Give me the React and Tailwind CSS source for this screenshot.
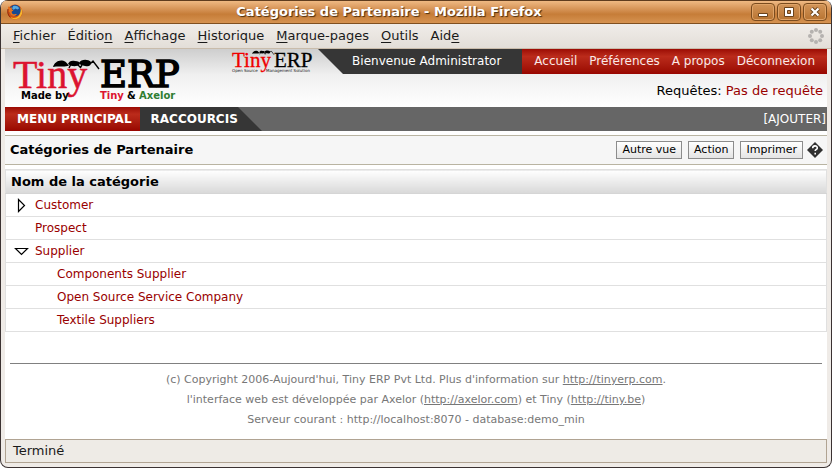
import React from "react";

const MENUS = [
  ["", "F", "ichier"],
  ["Éditio", "n", ""],
  ["", "A", "ffichage"],
  ["", "H", "istorique"],
  ["", "M", "arque-pages"],
  ["", "O", "utils"],
  ["Aid", "e", ""],
];

const ROWS = [
  { name: "Customer", state: "closed", level: 0 },
  { name: "Prospect", state: "leaf", level: 0 },
  { name: "Supplier", state: "open", level: 0 },
  { name: "Components Supplier", state: "leaf", level: 1 },
  { name: "Open Source Service Company", state: "leaf", level: 1 },
  { name: "Textile Suppliers", state: "leaf", level: 1 },
];

const RED_BAR = "bg-linear-to-b from-[#9c0a04] via-[#bb2b1b] via-30% to-[#980500]";

function FirefoxIcon() {
  return (
    <svg width="16" height="16" viewBox="0 0 16 16" aria-hidden="true">
      <circle cx="8" cy="8" r="7.5" fill="#d0500f" />
      <circle cx="8" cy="6.5" r="5.800" fill="#174a91" />
      <path d="M6 2.2c2-1 5-.2 6.300 2l-2 1.200-1.700-.9-2 1.300-1.500-1.300z" fill="#58a9df" />
      <path d="M1.200 2.200 3 4l2-.7-.2 2 1.700 1.100-1.700 1c-.5 2 1.300 3.400 3.400 2.700 1.300-.5 2 .2 1 1-2 1.700-5.200.8-6.200-1.800C1.500 7 .5 5 1.200 2.200z" fill="#e8701a" />
      <path d="M13.500 3.200c2.600 3.400 2.200 8-1 10.600-3 2.200-7.500 2-10-1 3 1.800 7 1.400 9-.8 2.200-2.300 2.600-5.500 2-8.800z" fill="#f7b52c" />
      <path d="M1 5c-.8 3.500.2 6.500 2.500 8.500" stroke="#8f2a10" fill="none" />
    </svg>
  );
}

function Ant() {
  return (
    <g>
      <path d="M0 8C1 4 5 1 9 1.500c4 .5 5 3 7 5C11 8.500 6 6.500 0 8z" />
      <path d="M15 5c1-3 4-4 7-3 3 0 5 1 5 3-3 3-8 3-12 0z" />
      <path d="M26 4c2-4 9-4 12-1 0 4-2 5-6 4-3-.5-5-1-6-3z" />
      <path d="M18 5l-2 4M24 5l4 4M29 6l-2 3M37 5l3-3 6 8" fill="none" stroke="#000" strokeWidth="1.400" />
    </g>
  );
}

function BigLogo() {
  return (
    <svg className="overflow-visible" width="176" height="46" viewBox="0 0 176 46" role="img" aria-label="Tiny ERP">
      <text x="2" y="31" fontFamily="Liberation Serif, serif" fontSize="40" fill="#dc1430" stroke="#dc1430" strokeWidth="0.500">Tiny</text>
      <text x="89" y="30" fontFamily="DejaVu Serif, serif" fontSize="37" fill="#000" stroke="#000" strokeWidth="1.600">ERP</text>
      <g transform="translate(42 2)"><Ant /></g>
      <g fontFamily="DejaVu Sans, sans-serif" fontWeight="700" fontSize="10">
        <text x="10" y="42">Made by</text>
        <text x="89" y="42" fill="#dc1430">Tiny</text>
        <text x="116" y="42">&amp;</text>
        <text x="128" y="42" fill="#2f7d32">Axelor</text>
      </g>
    </svg>
  );
}

function SmallLogo() {
  return (
    <svg className="overflow-visible" width="84" height="25" viewBox="0 0 84 25" role="img" aria-label="Tiny ERP, Open Source Management Solution">
      <text x="0" y="18" fontFamily="Liberation Serif, serif" fontSize="21" fill="#f00000" stroke="#f00000" strokeWidth="0.300">Tiny</text>
      <text x="42" y="18" fontFamily="Liberation Serif, serif" fontSize="21" fill="#000" stroke="#000" strokeWidth="0.300">ERP</text>
      <g transform="translate(20 1) scale(0.480)"><Ant /></g>
      <text x="0" y="23" fontFamily="DejaVu Sans, sans-serif" fontSize="4" fill="#222">Open Source</text>
      <text x="34" y="23" fontFamily="DejaVu Sans, sans-serif" fontSize="4" fill="#222">Management Solution</text>
    </svg>
  );
}

function WindowButton({ label, children }) {
  return (
    <button type="button" aria-label={label} className="flex h-[18px] w-6 items-center justify-center rounded-sm border border-[#7b4c1e] bg-linear-to-b from-[#d39558] to-[#b87431] shadow-[inset_0_0_0_1px_#e0a468]">
      <svg width="12" height="12" viewBox="0 0 12 12" aria-hidden="true">{children}</svg>
    </button>
  );
}

function TitleBar() {
  return (
    <div className="flex h-6 items-center gap-[2px] border-y border-t-[#5f3c1e] border-b-[#80501f] bg-linear-to-b from-[#efb983] via-[#c67d38] via-60% to-[#d69350] pr-1 pl-[6px]">
      <FirefoxIcon />
      <h1 className="flex-1 pl-1 text-center text-[13px] leading-5 font-bold text-white [text-shadow:1px_1px_1px_#4a2c0e]">
        Catégories de Partenaire - Mozilla Firefox
      </h1>
      <WindowButton label="Réduire">
        <path d="M1.500 7.500h9v3h-9z" fill="#fff" stroke="#6b431b" />
      </WindowButton>
      <WindowButton label="Agrandir">
        <path d="M1.500 1.500h9v9h-9zM4.500 4.500h3v3h-3z" fill="#fff" fillRule="evenodd" stroke="#6b431b" />
      </WindowButton>
      <WindowButton label="Fermer">
        <path d="M2.500 2.500l7 7M9.500 2.500l-7 7" stroke="#6b431b" strokeWidth="4" />
        <path d="M2.500 2.500l7 7M9.500 2.500l-7 7" stroke="#fff" strokeWidth="2.200" />
      </WindowButton>
    </div>
  );
}

function MenuBar() {
  return (
    <nav className="flex h-[25px] items-center border-b border-[#c9bcab] bg-linear-to-b from-[#f0ede9] to-[#e3ded8] pr-[6px] pl-[6px] text-[13px] leading-5 text-[#1a1a1a]">
      {MENUS.map(([before, key, after]) => (
        <button type="button" key={before + key + after} className="px-[6px]">
          {before}<span className="underline underline-offset-2">{key}</span>{after}
        </button>
      ))}
      <svg className="ml-auto" width="18" height="18" viewBox="0 0 18 18" fill="#b5b2af" aria-hidden="true">
        <circle cx="9" cy="3" r="2" /><circle cx="13.200" cy="4.800" r="2" />
        <circle cx="15" cy="9" r="2" /><circle cx="13.200" cy="13.200" r="2" />
        <circle cx="9" cy="15" r="2" /><circle cx="4.800" cy="13.200" r="2" />
        <circle cx="3" cy="9" r="2" /><circle cx="4.800" cy="4.800" r="2" />
      </svg>
    </nav>
  );
}

function Header() {
  return (
    <header className="flex h-[58px] justify-between bg-linear-to-b from-[#cecece] via-[#f0f0f0] via-45% to-white">
      <div className="pt-2 pl-[6px]"><BigLogo /></div>
      <div>
        <div className="flex h-[25px]">
          <SmallLogo />
          <svg className="ml-[2px]" width="25" height="25" aria-hidden="true"><path d="M0 0h25v25z" fill="#363636" /></svg>
          <div className="bg-[#363636] pr-[21px] pl-[9px] leading-[25px] text-white">Bienvenue Administrator</div>
          <nav className={`flex gap-3 px-3 leading-[25px] text-[#fbe9e7] ${RED_BAR}`}>
            <a href="#accueil">Accueil</a>
            <a href="#preferences">Préférences</a>
            <a href="#apropos">A propos</a>
            <a href="#deconnexion">Déconnexion</a>
          </nav>
        </div>
        <div className="pr-1 text-right text-[13px] leading-[33px]">
          Requêtes: <a href="#requetes" className="text-[#990000]">Pas de requête</a>
        </div>
      </div>
    </header>
  );
}

function Tabs() {
  return (
    <div className="flex h-6 bg-[#666] leading-6 text-white">
      <a href="#menu" className={`pr-2 pl-3 font-bold ${RED_BAR}`}>MENU PRINCIPAL</a>
      <a href="#raccourcis" className="bg-[#363636] pl-[11px] font-bold">RACCOURCIS</a>
      <svg width="24" height="24" aria-hidden="true"><path d="M0 0l24 24H0z" fill="#363636" /></svg>
      <a href="#ajouter" className="ml-auto pr-px">[AJOUTER]</a>
    </div>
  );
}

function Tool({ children }) {
  return (
    <button type="button" className="h-[18px] border border-[#8c8c8c] bg-linear-to-b from-white to-[#e4e4e4] px-[5px] text-[11px] leading-4 text-black">
      {children}
    </button>
  );
}

function Panel() {
  return (
    <div className="mt-1 flex h-[30px] items-center gap-[6px] border-y border-[#b9b4a2] bg-[#f6f6f6] pr-1 pl-[5px]">
      <h2 className="flex-1 text-[13px] font-bold">Catégories de Partenaire</h2>
      <Tool>Autre vue</Tool>
      <Tool>Action</Tool>
      <Tool>Imprimer</Tool>
      <a href="#aide" aria-label="Aide" className="-ml-[2px]">
        <svg width="16" height="16" viewBox="0 0 16 16" aria-hidden="true">
          <path d="M8 0l8 8-8 8-8-8z" fill="#303030" />
          <path d="M5.700 6.200c0-3 4.600-3 4.600-.3 0 1.600-2.100 1.500-2.100 3.200M8.200 10.800v1.700" fill="none" stroke="#fff" strokeWidth="1.600" />
        </svg>
      </a>
    </div>
  );
}

function Toggle({ state }) {
  if (state === "leaf") return <span className="w-[17px]" />;
  return (
    <button type="button" aria-label={state === "open" ? "Replier" : "Déplier"} className="flex w-[17px] justify-center">
      <svg width="15" height="15" viewBox="0 0 15 15" fill="none" stroke="#000" strokeWidth="1.200" aria-hidden="true">
        <path d={state === "open" ? "M1.500 4.500h12l-6 6z" : "M4.500 1.500v12l6-6z"} />
      </svg>
    </button>
  );
}

function Tree() {
  return (
    <table className="mt-1 w-full border-collapse border border-[#e0e0e0]">
      <thead>
        <tr>
          <th className="h-6 border-b border-[#d5d5d5] bg-linear-to-b from-white to-[#d8d8d8] px-[5px] text-left text-[13px] leading-5 font-bold">
            Nom de la catégorie
          </th>
        </tr>
      </thead>
      <tbody>
        {ROWS.map((row) => (
          <tr key={row.name} className="border-b border-[#e0e0e0]">
            <td className={row.level ? "h-[23px] pl-[29px]" : "h-[23px] pl-[7px]"}>
              <div className="flex items-center gap-[5px] leading-5">
                <Toggle state={row.state} />
                <a href="#categorie" className="text-[#990000]">{row.name}</a>
              </div>
            </td>
          </tr>
        ))}
      </tbody>
    </table>
  );
}

function Footer() {
  return (
    <footer className="mx-[5px] mt-[31px] border-t border-[#808080] pt-[6px] text-center text-[11px] leading-5 text-[#777]">
      <p>(c) Copyright 2006-Aujourd'hui, Tiny ERP Pvt Ltd. Plus d'information sur <a className="underline" href="#tinyerp">http://tinyerp.com</a>.</p>
      <p>l'interface web est développée par Axelor (<a className="underline" href="#axelor">http://axelor.com</a>) et Tiny (<a className="underline" href="#tiny">http://tiny.be</a>)</p>
      <p>Serveur courant : http://localhost:8070 - database:demo_min</p>
    </footer>
  );
}

export default function App() {
  return (
    <div className="bg-white font-['DejaVu_Sans',sans-serif] text-[12px] text-black">
      <div className="flex min-h-screen flex-col overflow-hidden rounded-lg border-x border-b border-[#3b3232] bg-[#efebe7]">
        <TitleBar />
        <MenuBar />
        <main className="mx-1 flex-1 bg-white">
          <Header />
          <Tabs />
          <Panel />
          <Tree />
          <Footer />
        </main>
        <div role="status" className="mx-1 mb-1 h-6 border border-[#b0a392] bg-[#eeebe6] px-[7px] text-[13px] leading-[22px] text-[#1a1a1a]">
          Terminé
        </div>
      </div>
    </div>
  );
}
